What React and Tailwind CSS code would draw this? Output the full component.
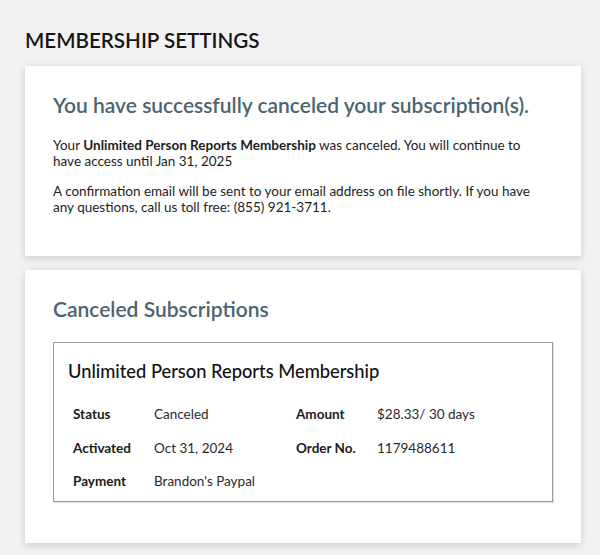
const details = [
  [
    { label: 'Status', value: 'Canceled' },
    { label: 'Amount', value: '$28.33/ 30 days' },
  ],
  [
    { label: 'Activated', value: 'Oct 31, 2024' },
    { label: 'Order No.', value: '1179488611' },
  ],
  [{ label: 'Payment', value: "Brandon's Paypal" }],
];

function Card({ children, className = '' }) {
  return (
    <div className={`bg-white w-[556px] px-[28px] shadow-[0_2px_8px_rgba(0,0,0,0.16)] ${className}`}>
      {children}
    </div>
  );
}

export default function App() {
  return (
    <div className="min-h-[555px] bg-[#f2f2f2] pl-[25px] pt-[26px] text-[#1d1d1d] font-['Lato','Liberation_Sans',sans-serif]">
      <h1 className="text-[20.6px] leading-[28px] font-semibold text-[#161616] mb-[12px]">
        MEMBERSHIP SETTINGS
      </h1>

      <Card className="pt-[25px] pb-[41px]">
        <h2 className="text-[21px] leading-[28px] font-semibold text-[#4a6470]">
          You have successfully canceled your subscription(s).
        </h2>
        <p className="mt-[18px] text-[13.5px] leading-[16px] pr-[22px]">
          Your <span className="font-bold">Unlimited Person Reports Membership</span> was canceled. You will
          continue to have access until Jan 31, 2025
        </p>
        <p className="mt-[14px] text-[13.5px] leading-[16px] pr-[10px]">
          A confirmation email will be sent to your email address on file shortly. If you have any questions, call
          us toll free: (855) 921-3711.
        </p>
      </Card>

      <Card className="mt-[14px] pt-[25px] pb-[41px]">
        <h2 className="text-[21px] leading-[28px] font-semibold text-[#4a6470]">Canceled Subscriptions</h2>
        <div className="mt-[19px] w-[500px] border border-[#9c9c9c] shadow-[1px_1px_1px_rgba(0,0,0,0.12)] pl-[14px] pt-[16px] pb-[12px]">
          <h3 className="text-[18.3px] leading-[24px] font-medium text-[#111]">Unlimited Person Reports Membership</h3>
          <div className="mt-[23px] pl-[5px] flex flex-col gap-[17.5px] text-[13.5px] leading-[16px]">
            {details.map((row, i) => (
              <div key={i} className="flex">
                {row.map((item) => (
                  <div key={item.label} className="flex w-[223px]">
                    <span className="w-[81px] font-bold text-[#1a1a1a]">{item.label}</span>
                    <span className="text-[#2a2a2a]">{item.value}</span>
                  </div>
                ))}
              </div>
            ))}
          </div>
        </div>
      </Card>
    </div>
  );
}
